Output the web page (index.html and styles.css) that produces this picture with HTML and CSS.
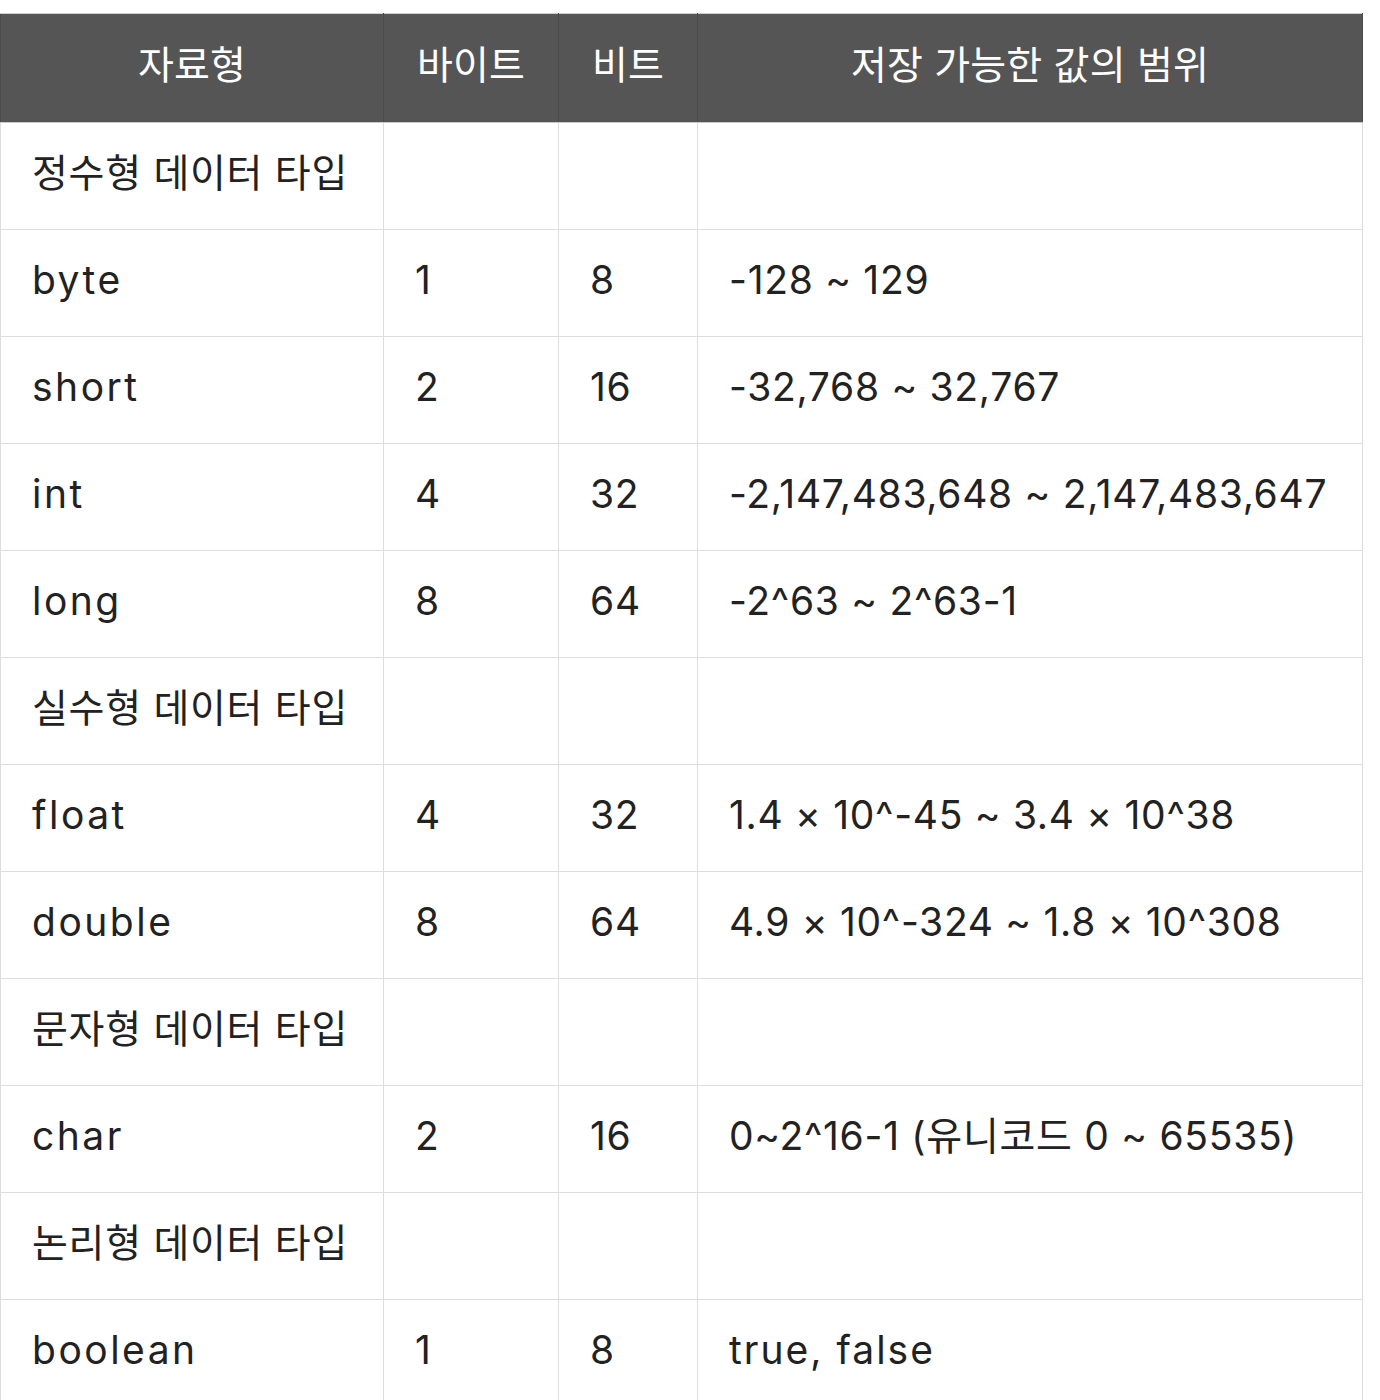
FILE: index.html
```html
<!DOCTYPE html>
<html lang="ko">
<head>
<meta charset="utf-8">
<link rel="stylesheet" href="styles.css">
</head>
<body>
<table class="types">
  <colgroup>
    <col class="c-type">
    <col class="c-byte">
    <col class="c-bit">
    <col class="c-range">
  </colgroup>
  <thead>
    <tr><th>자료형</th><th>바이트</th><th>비트</th><th>저장 가능한 값의 범위</th></tr>
  </thead>
  <tbody>
    <tr><td>정수형 데이터 타입</td><td></td><td></td><td></td></tr>
    <tr><td class="w">byte</td><td>1</td><td>8</td><td>-128 ~ 129</td></tr>
    <tr><td class="w">short</td><td>2</td><td>16</td><td>-32,768 ~ 32,767</td></tr>
    <tr><td class="w">int</td><td>4</td><td>32</td><td>-2,147,483,648 ~ 2,147,483,647</td></tr>
    <tr><td class="w">long</td><td>8</td><td>64</td><td>-2^63 ~ 2^63-1</td></tr>
    <tr><td>실수형 데이터 타입</td><td></td><td></td><td></td></tr>
    <tr><td class="w">float</td><td>4</td><td>32</td><td>1.4 × 10^-45 ~ 3.4 × 10^38</td></tr>
    <tr><td class="w">double</td><td>8</td><td>64</td><td>4.9 × 10^-324 ~ 1.8 × 10^308</td></tr>
    <tr><td>문자형 데이터 타입</td><td></td><td></td><td></td></tr>
    <tr><td class="w">char</td><td>2</td><td>16</td><td>0~2^16-1 (유니코드 0 ~ 65535)</td></tr>
    <tr><td>논리형 데이터 타입</td><td></td><td></td><td></td></tr>
    <tr><td class="w">boolean</td><td>1</td><td>8</td><td class="w2">true, false</td></tr>
  </tbody>
</table>
</body>
</html>
```

FILE: styles.css
```css
html, body {
  margin: 0;
  padding: 0;
  background: #fff;
}
body {
  padding-top: 13px;
  font-family: Inter, "Noto Sans CJK KR", "Noto Sans", sans-serif;
  color: #222;
}
.types {
  border-collapse: collapse;
  table-layout: fixed;
  width: 1362px;
  font-size: 39px;
  line-height: 1.2;
  letter-spacing: 0.7px;
}
.c-type { width: 383px; }
.c-byte { width: 175px; }
.c-bit { width: 139px; }
.c-range { width: 665px; }
.types thead tr { height: 109px; }
.types th {
  background: #555555;
  color: #fff;
  font-weight: 400;
  letter-spacing: 0.2px;
  text-align: center;
  vertical-align: middle;
  border: 1px solid #4b4b4b;
  border-top-color: #cfcfcf;
  border-bottom-color: #c8c8c8;
  padding: 0 0 6px 0;
}
.types tbody tr { height: 107px; }
.types td {
  border: 1px solid #dddddd;
  padding: 0 0 6px 31px;
  vertical-align: middle;
  white-space: nowrap;
  text-align: left;
}
.types td.w { letter-spacing: 2.5px; }
.types td.w2 { letter-spacing: 2px; }
```
